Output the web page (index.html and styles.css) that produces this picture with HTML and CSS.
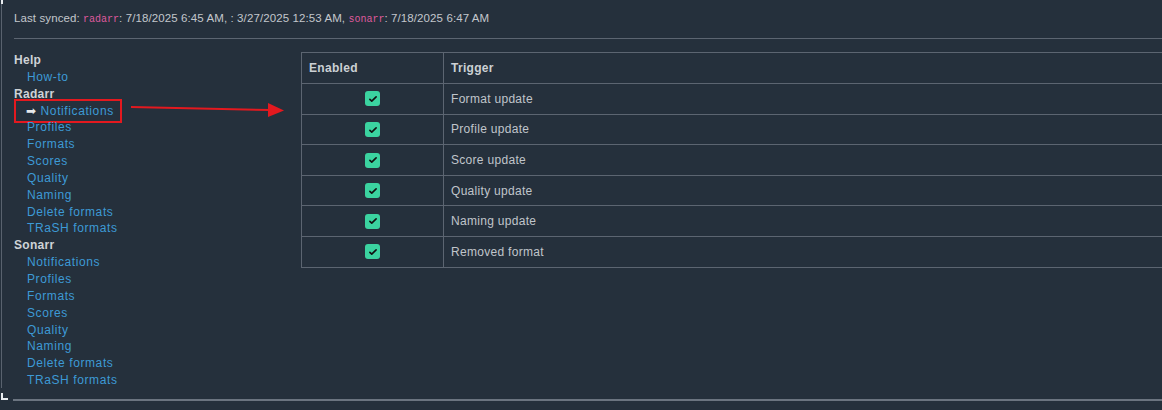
FILE: index.html
```html
<!DOCTYPE html>
<html>
<head>
<meta charset="utf-8">
<link rel="stylesheet" href="styles.css">
</head>
<body>
<div class="frame">
  <span class="corner-top"></span>
  <span class="corner-bottom"></span>
  <div class="synced">Last synced: <code class="app">radarr</code>: 7/18/2025 6:45 AM, : 3/27/2025 12:53 AM, <code class="app">sonarr</code>: 7/18/2025 6:47 AM</div>
  <div class="rule"></div>
  <div class="content">
    <nav class="sidebar">
      <div class="group">Help</div>
      <a class="link">How-to</a>
      <div class="group">Radarr</div>
      <a class="link active"><span class="pointer">➡</span> Notifications</a>
      <a class="link">Profiles</a>
      <a class="link">Formats</a>
      <a class="link">Scores</a>
      <a class="link">Quality</a>
      <a class="link">Naming</a>
      <a class="link">Delete formats</a>
      <a class="link">TRaSH formats</a>
      <div class="group">Sonarr</div>
      <a class="link">Notifications</a>
      <a class="link">Profiles</a>
      <a class="link">Formats</a>
      <a class="link">Scores</a>
      <a class="link">Quality</a>
      <a class="link">Naming</a>
      <a class="link">Delete formats</a>
      <a class="link">TRaSH formats</a>
    </nav>
    <table class="triggers">
      <thead>
        <tr><th class="col-enabled">Enabled</th><th>Trigger</th></tr>
      </thead>
      <tbody>
        <tr><td class="cell-check"><span class="check"><svg viewBox="0 0 16 16" width="10" height="10"><path d="M3 8.5l3 3 7-7" fill="none" stroke="#111" stroke-width="2.6" stroke-linecap="round" stroke-linejoin="round"/></svg></span></td><td>Format update</td></tr>
        <tr><td class="cell-check"><span class="check"><svg viewBox="0 0 16 16" width="10" height="10"><path d="M3 8.5l3 3 7-7" fill="none" stroke="#111" stroke-width="2.6" stroke-linecap="round" stroke-linejoin="round"/></svg></span></td><td>Profile update</td></tr>
        <tr><td class="cell-check"><span class="check"><svg viewBox="0 0 16 16" width="10" height="10"><path d="M3 8.5l3 3 7-7" fill="none" stroke="#111" stroke-width="2.6" stroke-linecap="round" stroke-linejoin="round"/></svg></span></td><td>Score update</td></tr>
        <tr><td class="cell-check"><span class="check"><svg viewBox="0 0 16 16" width="10" height="10"><path d="M3 8.5l3 3 7-7" fill="none" stroke="#111" stroke-width="2.6" stroke-linecap="round" stroke-linejoin="round"/></svg></span></td><td>Quality update</td></tr>
        <tr><td class="cell-check"><span class="check"><svg viewBox="0 0 16 16" width="10" height="10"><path d="M3 8.5l3 3 7-7" fill="none" stroke="#111" stroke-width="2.6" stroke-linecap="round" stroke-linejoin="round"/></svg></span></td><td>Naming update</td></tr>
        <tr><td class="cell-check"><span class="check"><svg viewBox="0 0 16 16" width="10" height="10"><path d="M3 8.5l3 3 7-7" fill="none" stroke="#111" stroke-width="2.6" stroke-linecap="round" stroke-linejoin="round"/></svg></span></td><td>Removed format</td></tr>
      </tbody>
    </table>
  </div>
  <svg class="annotation-arrow" width="160" height="20" viewBox="0 0 160 20">
    <line x1="0" y1="5" x2="140" y2="8" stroke="#e3191f" stroke-width="2"/>
    <polygon points="137,1 153,8.4 137,15" fill="#e3191f"/>
  </svg>
</div>
</body>
</html>
```

FILE: styles.css
```css
html, body {
  margin: 0;
  padding: 0;
  overflow: hidden;
}
body {
  background: #25303c;
  font-family: "Liberation Sans", Arial, sans-serif;
  font-size: 12px;
  letter-spacing: 0.3px;
  color: #c3c7cc;
  width: 1162px;
  height: 410px;
}
.frame {
  position: relative;
  width: 1220px;
  margin-left: 1px;
  border-left: 1px solid #59626e;
  height: 388px;
  padding: 0 0 0 12px;
  box-sizing: content-box;
}
.corner-top {
  position: absolute;
  left: -1px;
  top: 0;
  width: 2px;
  height: 4px;
  background: #e8ecef;
}
.corner-bottom {
  position: absolute;
  left: -1px;
  top: 393px;
  width: 7px;
  height: 7px;
  border-left: 2px solid #e8ecef;
  border-bottom: 2px solid #e8ecef;
  box-sizing: border-box;
}
.frame::after {
  content: "";
  position: absolute;
  left: 11px;
  right: 0;
  top: 399px;
  height: 1.5px;
  background: #6b7480;
}
.synced {
  padding-top: 11px;
  height: 15px;
  line-height: 15px;
  font-size: 11.5px;
  color: #c3c7cc;
  letter-spacing: 0.1px;
}
.app {
  font-family: "Liberation Mono", monospace;
  font-size: 10px;
  letter-spacing: 0;
  color: #df5a9d;
}
.rule {
  margin-top: 12px;
  height: 1px;
  background: #5c6571;
}
.content {
  display: flex;
  align-items: flex-start;
  margin-top: 13px;
}
.sidebar {
  width: 287px;
  flex: none;
  display: flex;
  flex-direction: column;
  margin-top: 0;
  letter-spacing: 0.6px;
}
.group {
  font-weight: bold;
  color: #cfd3d7;
  height: 16.85px;
  line-height: 16.85px;
  letter-spacing: 0.3px;
}
.link {
  color: #3d9ad6;
  padding-left: 13px;
  height: 16.85px;
  line-height: 16.85px;
  align-self: flex-start;
}
.link.active {
  margin-left: 1px;
  padding: 3px 7px 3px 11px;
  outline: 2px solid #e3191f;
  outline-offset: -1px;
  box-sizing: content-box;
  margin-top: -3px;
  margin-bottom: -3px;
}
.pointer {
  font-family: "DejaVu Sans", sans-serif;
  color: #e6e8ea;
  font-size: 12px;
}
.triggers {
  border-collapse: collapse;
  flex: 1;
  width: 900px;
  font-size: 12px;
}
.triggers th, .triggers td {
  border: 1px solid #5c6571;
  text-align: left;
  padding: 0 7px;
  height: 29.6px;
  color: #c0c5cb;
}
.triggers th {
  height: 30px;
  font-weight: bold;
  color: #ccd0d4;
}
.col-enabled {
  width: 127px;
}
.cell-check {
  text-align: center !important;
}
.check {
  display: inline-flex;
  align-items: center;
  justify-content: center;
  width: 15px;
  height: 15px;
  border-radius: 3px;
  background: #3bd3a0;
  vertical-align: middle;
}
.annotation-arrow {
  position: absolute;
  left: 129px;
  top: 102px;
}
```
